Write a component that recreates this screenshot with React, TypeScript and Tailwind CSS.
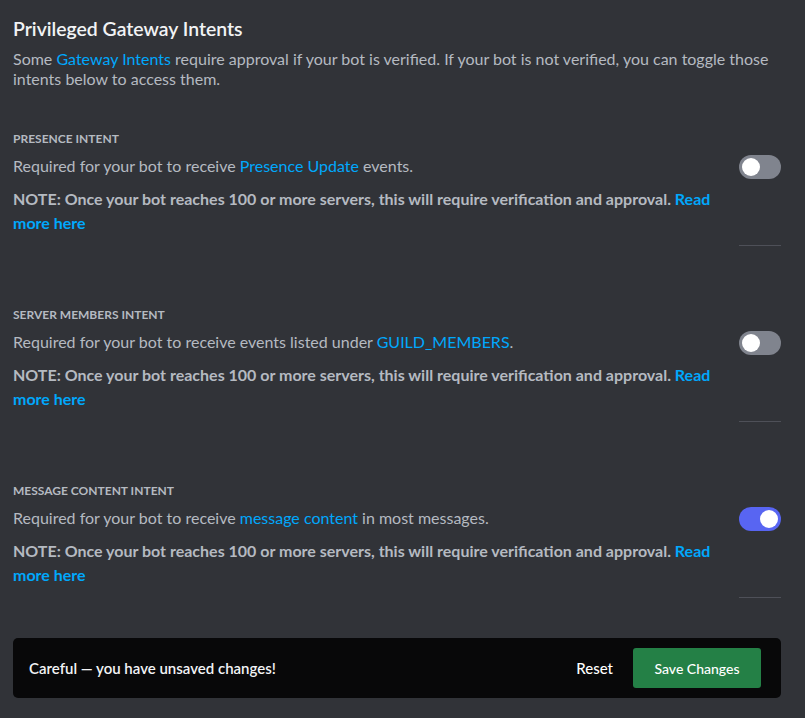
import { useState } from 'react';

type Intent = {
    title: string;
    before: string;
    link: string;
    after: string;
};

const intents: Intent[] = [
    { title: 'Presence Intent', before: 'Required for your bot to receive ', link: 'Presence Update', after: ' events.' },
    { title: 'Server Members Intent', before: 'Required for your bot to receive events listed under ', link: 'GUILD_MEMBERS', after: '.' },
    { title: 'Message Content Intent', before: 'Required for your bot to receive ', link: 'message content', after: ' in most messages.' },
];

function Toggle({ on, onClick }: { on: boolean; onClick: () => void }) {
    return (
        <button
            onClick={onClick}
            className={`relative w-[42px] h-[24px] rounded-full shrink-0 ${on ? 'bg-[#5865f2]' : 'bg-[#80848e]'}`}
        >
            <span
                className={`absolute top-[3px] w-[18px] h-[18px] rounded-full bg-white ${on ? 'left-[21px]' : 'left-[3px]'}`}
            />
        </button>
    );
}

export default function App() {
    const [enabled, setEnabled] = useState([false, false, true]);

    return (
        <div className="min-h-[718px] bg-[#313338] pl-[13px] pr-[24px] pt-[16px] pb-[20px] text-[#dbdee1]" style={{ fontFamily: 'Lato, sans-serif' }}>
            <h2 className="text-[19.4px] leading-[26px] font-semibold text-[#f2f3f5]">Privileged Gateway Intents</h2>
            <p className="mt-[7px] text-[16px] leading-[20px] text-[#b5bac1]">
                Some <span className="text-[#00a8fc]">Gateway Intents</span> require approval if your bot is verified. If your bot is not verified, you can toggle those intents below to access them.
            </p>

            <div className="mt-[42px]">
                {intents.map((intent, i) => (
                    <div key={intent.title} className={i === intents.length - 1 ? 'mb-[40px]' : 'mb-[61px]'}>
                        <div className="text-[12px] leading-[16px] font-bold uppercase text-[#b5bac1]">{intent.title}</div>
                        <div className="flex justify-between gap-6 mt-[8px]">
                            <div className="max-w-[702px]">
                                <div className="text-[16px] leading-[22px] text-[#b5bac1]">
                                    {intent.before}
                                    <span className="text-[#00a8fc]">{intent.link}</span>
                                    {intent.after}
                                </div>
                                <div className="mt-[10px] text-[16px] leading-[24px] font-bold text-[#b5bac1]">
                                    NOTE: Once your bot reaches 100 or more servers, this will require verification and approval. <span className="text-[#00a8fc]">Read more here</span>
                                </div>
                            </div>
                            <Toggle on={enabled[i]} onClick={() => setEnabled(enabled.map((v, j) => (j === i ? !v : v)))} />
                        </div>
                        <div className="flex justify-end mt-[10px]">
                            <div className="w-[42px] h-px bg-[#4e5058]" />
                        </div>
                    </div>
                ))}
            </div>

            <div className="flex items-center justify-between rounded-[5px] bg-[#080809] h-[60px] pl-[16px] pr-[20px]">
                <span className="text-[15px] font-semibold text-[#f2f3f5]">Careful — you have unsaved changes!</span>
                <div className="flex items-center gap-[20px]">
                    <button className="text-[15px] font-medium text-white">Reset</button>
                    <button className="h-[40px] w-[128px] rounded-[3px] bg-[#248046] text-[14px] font-medium text-white">Save Changes</button>
                </div>
            </div>
        </div>
    );
}
